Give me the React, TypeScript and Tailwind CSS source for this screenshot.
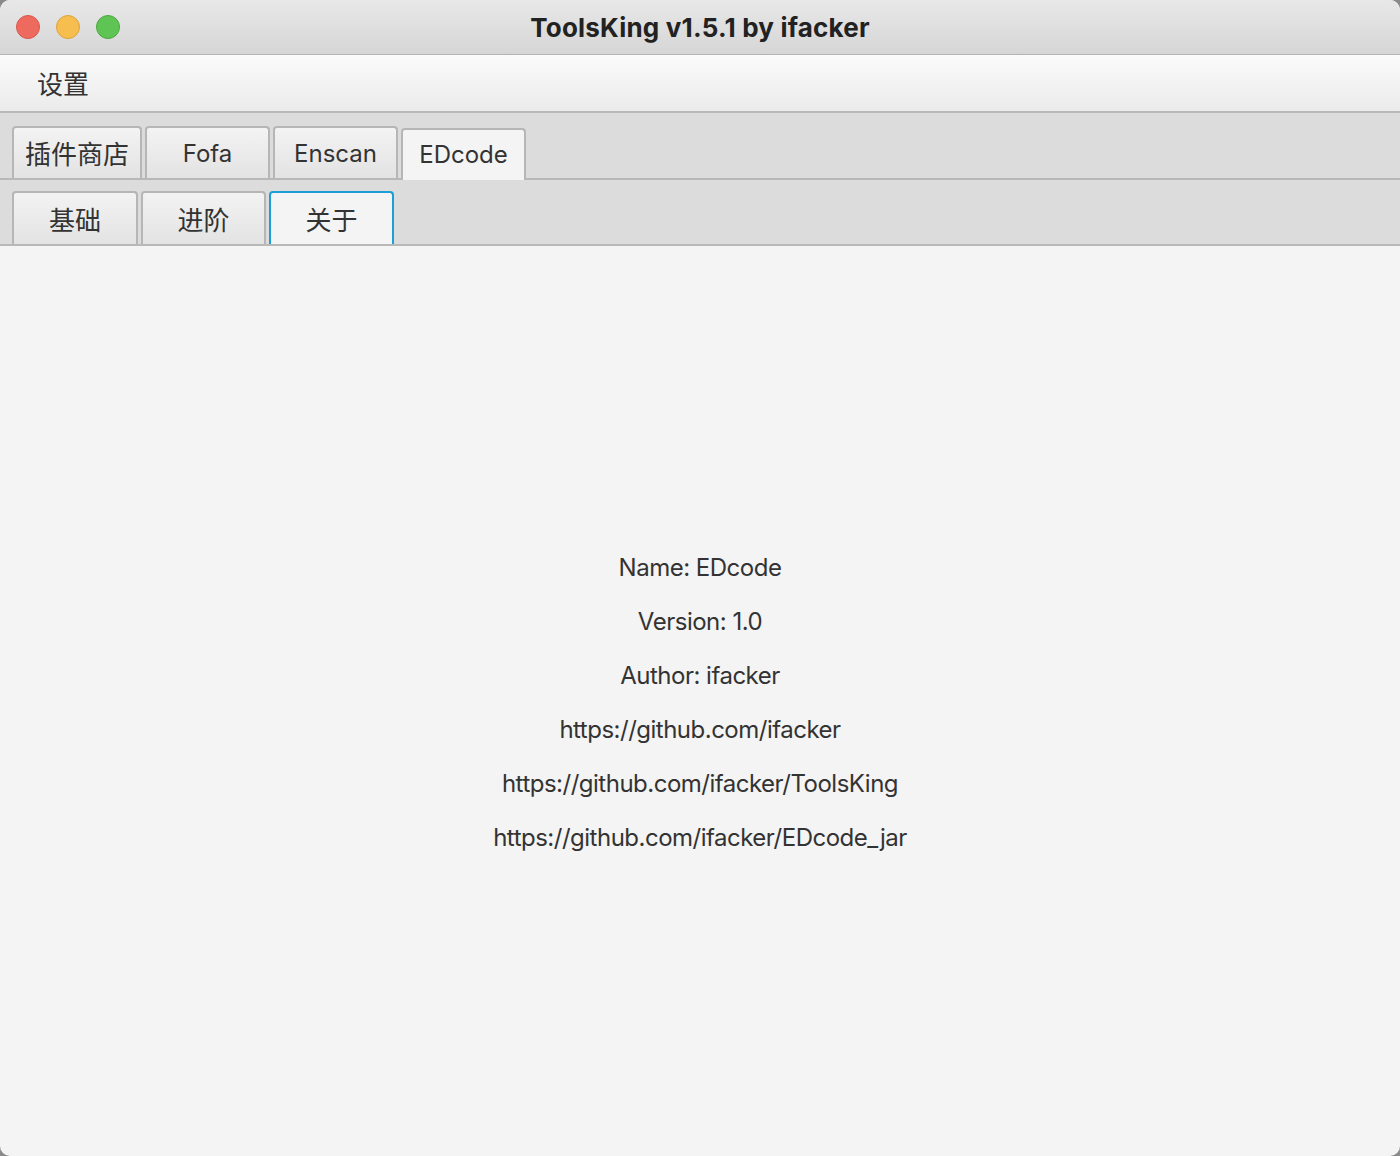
const font = { fontFamily: 'Inter, "Noto Sans CJK SC", sans-serif' };

const TrafficLights = () => (
  <div className="flex items-center gap-[16px] pl-[16px]">
    <span className="w-[24px] h-[24px] rounded-full bg-[#ee6a5e] border border-[#d8574c]" />
    <span className="w-[24px] h-[24px] rounded-full bg-[#f6be4f] border border-[#dea23a]" />
    <span className="w-[24px] h-[24px] rounded-full bg-[#5ec454] border border-[#4aa83f]" />
  </div>
);

interface TabProps {
  label: string;
  selected?: boolean;
  focused?: boolean;
  cjk?: boolean;
  width: string;
}

const Tab = ({ label, selected, focused, cjk, width }: TabProps) => (
  <div
    className={`${width} h-full flex items-center justify-center rounded-t-[4px] border-x-2 border-t-2 ${cjk ? "text-[26px] pt-[3px]" : "text-[24px] pt-[1px]"} text-[#333] ${
      focused
        ? "border-[#1b9fd6] bg-[#f4f4f4]"
        : selected
        ? "border-[#b6b6b6] bg-[#f4f4f4] -mb-[2px] pb-[2px]"
        : "border-[#b6b6b6] bg-gradient-to-b from-[#f3f3f3] to-[#e3e3e3]"
    }`}
  >
    {label}
  </div>
);

const App = () => {
  return (
    <div className="w-[1400px] h-[1156px] bg-[#8a8a8a]" style={font}>
      <div className="w-full h-full rounded-[10px] overflow-hidden flex flex-col bg-[#f4f4f4]">
        {/* title bar */}
        <div className="relative h-[55px] flex items-center bg-gradient-to-b from-[#e8e8e8] to-[#d6d6d6] border-b border-[#b4b4b4]">
          <TrafficLights />
          <div className="absolute inset-0 flex items-center justify-center text-[26px] font-bold text-[#222] tracking-[0.2px]">
            ToolsKing v1.5.1 by ifacker
          </div>
        </div>
        {/* menu bar */}
        <div className="h-[58px] flex items-center pt-[3px] px-[37px] bg-gradient-to-b from-[#fbfbfb] to-[#ebebeb] border-b-2 border-[#b8b8b8] text-[26px] text-[#333]">
          设置
        </div>
        {/* outer tabs */}
        <div className="h-[67px] flex items-end pl-[12px] bg-[#dcdcdc] border-b-2 border-[#b8b8b8]">
          <div className="flex items-end gap-[3px] h-[52px]">
            <Tab label="插件商店" width="w-[130px]" cjk />
            <Tab label="Fofa" width="w-[125px]" />
            <Tab label="Enscan" width="w-[125px]" />
            <Tab label="EDcode" width="w-[125px]" selected />
          </div>
        </div>
        {/* inner tabs */}
        <div className="h-[66px] flex items-end pl-[12px] bg-[#dcdcdc] border-b-2 border-[#b8b8b8]">
          <div className="flex items-end gap-[3px] h-[53px]">
            <Tab label="基础" width="w-[126px]" cjk />
            <Tab label="进阶" width="w-[125px]" cjk />
            <Tab label="关于" width="w-[125px]" cjk focused />
          </div>
        </div>
        {/* content */}
        <div className="flex-1 flex flex-col items-center pt-[307px] gap-[25px] text-[24px] leading-[29px] text-[#333] tracking-[-0.5px]">
          <div>Name: EDcode</div>
          <div>Version: 1.0</div>
          <div>Author: ifacker</div>
          <div>https://github.com/ifacker</div>
          <div>https://github.com/ifacker/ToolsKing</div>
          <div>https://github.com/ifacker/EDcode_jar</div>
        </div>
      </div>
    </div>
  );
};

export default App;
